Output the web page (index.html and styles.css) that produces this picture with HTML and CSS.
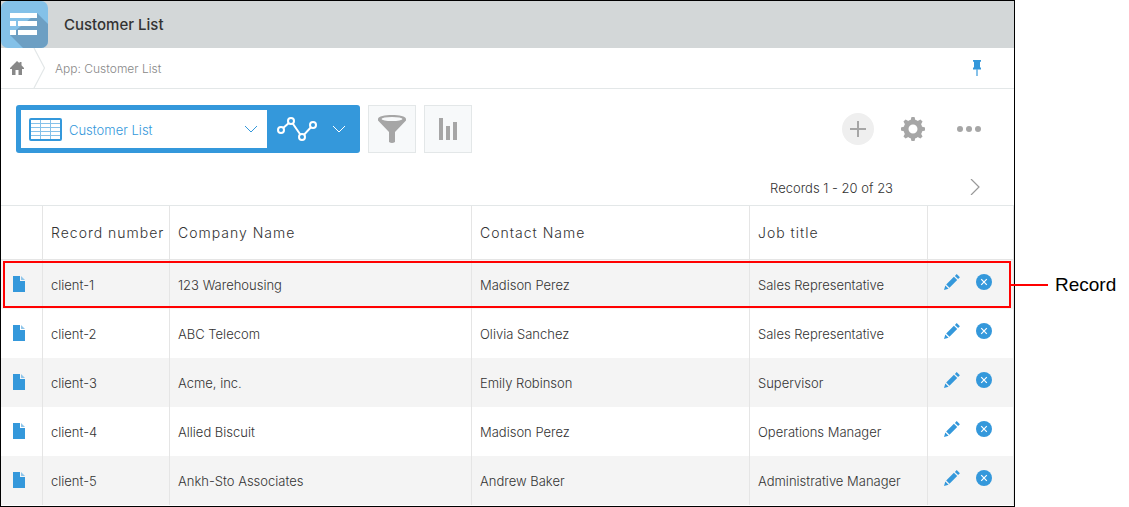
FILE: index.html
```html
<!DOCTYPE html>
<html lang="en">
<head>
<meta charset="utf-8">
<title>Customer List</title>
<link rel="stylesheet" href="styles.css">
</head>
<body>
<svg class="defs" aria-hidden="true">
  <symbol id="doc" viewBox="0 0 12 16"><path d="M0 0h7v5h5v11H0z" fill="#3498db"/><path d="M8 0l4 4H8z" fill="#8fc5ea"/></symbol>
  <symbol id="pencil" viewBox="0 0 16 16"><path d="M0 16l1.300-4.600 3.300 3.300zM2.200 10.500l7.700-7.700 3.300 3.300-7.700 7.700zM10.900 1.900L12.700.1l3.200 3.200-1.800 1.800z" fill="#3498db"/></symbol>
  <symbol id="remove" viewBox="0 0 16 16"><circle cx="8" cy="8" r="8" fill="#3498db"/><path d="M5.200 5.200l5.600 5.600M10.800 5.200l-5.600 5.600" stroke="#fff" stroke-width="1.200"/></symbol>
</svg>
<div class="page">
  <main class="app">
    <header class="title-bar">
      <svg class="logo" viewBox="0 0 47 47" aria-hidden="true">
        <rect width="47" height="47" rx="7" fill="#84c1e8"/>
        <path d="M36 12l11 11v17a7 7 0 0 1-7 7H22L9 34z" fill="#6d9fc3"/>
        <path d="M9 12h27v5H9zM9 20h6v5H9zM17 20h19v5H17zM9 29h6v5H9zM17 29h19v5H17z" fill="#fff"/>
      </svg>
      <h1>Customer List</h1>
    </header>
    <nav class="crumbs">
      <a class="home" href="#" aria-label="Home"><svg width="14" height="14" viewBox="0 0 14 14"><path d="M7 0l2.500 2.300V1h2v3.200L14 7v1h-2v6H8.500V9h-3v5H2V8H0V7z" fill="#888"/></svg></a>
      <svg class="divider" width="14" height="40" viewBox="0 0 14 40" aria-hidden="true"><path d="M2 0l10.500 20L2 40" fill="none" stroke="#e3e7e8" stroke-width="1.200"/></svg>
      <a class="crumb" href="#">App: Customer List</a>
      <button class="pin" aria-label="Pin"><svg width="8" height="16" viewBox="0 0 8 16"><path d="M0 0h8v1.800H7V7l1 1v1.500H0V8l1-1V1.800H0z" fill="#3498db"/><path d="M4 9v7" stroke="#5dade2" stroke-width="1.500"/></svg></button>
    </nav>
    <div class="toolbar">
      <div class="views">
        <button class="view">
          <svg width="33" height="23" viewBox="0 0 33 23" aria-hidden="true"><path d="M2 5.500h29M2 9.500h29M2 13.500h29M2 17.500h29M11.500 2v19M21.500 2v19" stroke="#85c1e9" fill="none"/><rect x="1" y="1" width="31" height="21" rx="1" fill="none" stroke="#3498db" stroke-width="2"/></svg>
          <span>Customer List</span>
          <svg class="caret" width="14" height="8" viewBox="0 0 14 8" aria-hidden="true"><path d="M1 1l6 6 6-6" fill="none" stroke="#3498db"/></svg>
        </button>
        <button class="graph" aria-label="Graphs">
          <svg width="40" height="24" viewBox="0 0 40 24"><path d="M4 13L14 4l11 16L36 8" fill="none" stroke="#fff" stroke-width="2"/><g fill="#3498db" stroke="#fff" stroke-width="2"><circle cx="4" cy="13" r="3"/><circle cx="14" cy="4" r="3"/><circle cx="25" cy="20" r="3"/><circle cx="36" cy="8" r="3"/></g></svg>
          <svg width="14" height="8" viewBox="0 0 14 8"><path d="M1 1l6 6 6-6" fill="none" stroke="#fff"/></svg>
        </button>
      </div>
      <button class="tool" aria-label="Filter"><svg width="28" height="28" viewBox="0 0 28 28"><path d="M0 4C0-1.300 28-1.300 28 4v1.500L17 17v10q-3 2-6 0V17L0 5.500z" fill="#a6a6a6"/><ellipse cx="14" cy="4" rx="10.500" ry="2" fill="#f7f9fa"/></svg></button>
      <button class="tool" aria-label="Chart"><svg width="18" height="22" viewBox="0 0 18 22"><path d="M0 0h4v22H0zM7 8h4v14H7zM14 4h4v18h-4z" fill="#a6a6a6"/></svg></button>
      <div class="actions">
        <button class="add" aria-label="Add record"><svg width="16" height="16" viewBox="0 0 16 16"><path d="M8 0v16M0 8h16" stroke="#a6a6a6" stroke-width="2"/></svg></button>
        <button aria-label="Settings"><svg width="24" height="24" viewBox="-12 -12 24 24"><circle r="7" fill="none" stroke="#a6a6a6" stroke-width="5"/><g fill="#a6a6a6"><path id="cog" d="M-2.500-8.500L-1.500-12h3l1 3.500zM-2.500 8.500L-1.500 12h3l1-3.500z"/><use href="#cog" transform="rotate(45)"/><use href="#cog" transform="rotate(90)"/><use href="#cog" transform="rotate(135)"/></g></svg></button>
        <button aria-label="More"><svg width="24" height="6" viewBox="0 0 24 6"><g fill="#a6a6a6"><circle cx="3" cy="3" r="3"/><circle cx="12" cy="3" r="3"/><circle cx="21" cy="3" r="3"/></g></svg></button>
      </div>
    </div>
    <div class="pager">
      <span>Records 1 - 20 of 23</span>
      <button aria-label="Next page"><svg width="10" height="16" viewBox="0 0 10 16"><path d="M1 0l8 8-8 8" fill="none" stroke="#999" stroke-width="1.200"/></svg></button>
    </div>
    <table class="records">
      <colgroup><col class="c-icon"><col class="c-number"><col><col class="c-contact"><col class="c-job"><col class="c-actions"></colgroup>
      <thead><tr><th></th><th>Record number</th><th>Company Name</th><th>Contact Name</th><th>Job title</th><th></th></tr></thead>
      <tbody>
        <tr class="marked"><td><a class="open" href="#" aria-label="Open"><svg><use href="#doc"/></svg></a></td><td>client-1</td><td>123 Warehousing</td><td>Madison Perez</td><td>Sales Representative</td><td><div class="row-tools"><button aria-label="Edit"><svg><use href="#pencil"/></svg></button><button aria-label="Delete"><svg><use href="#remove"/></svg></button></div><div class="callout"><span>Record</span></div></td></tr>
        <tr><td><a class="open" href="#" aria-label="Open"><svg><use href="#doc"/></svg></a></td><td>client-2</td><td>ABC Telecom</td><td>Olivia Sanchez</td><td>Sales Representative</td><td><div class="row-tools"><button aria-label="Edit"><svg><use href="#pencil"/></svg></button><button aria-label="Delete"><svg><use href="#remove"/></svg></button></div></td></tr>
        <tr><td><a class="open" href="#" aria-label="Open"><svg><use href="#doc"/></svg></a></td><td>client-3</td><td>Acme, inc.</td><td>Emily Robinson</td><td>Supervisor</td><td><div class="row-tools"><button aria-label="Edit"><svg><use href="#pencil"/></svg></button><button aria-label="Delete"><svg><use href="#remove"/></svg></button></div></td></tr>
        <tr><td><a class="open" href="#" aria-label="Open"><svg><use href="#doc"/></svg></a></td><td>client-4</td><td>Allied Biscuit</td><td>Madison Perez</td><td>Operations Manager</td><td><div class="row-tools"><button aria-label="Edit"><svg><use href="#pencil"/></svg></button><button aria-label="Delete"><svg><use href="#remove"/></svg></button></div></td></tr>
        <tr><td><a class="open" href="#" aria-label="Open"><svg><use href="#doc"/></svg></a></td><td>client-5</td><td>Ankh-Sto Associates</td><td>Andrew Baker</td><td>Administrative Manager</td><td><div class="row-tools"><button aria-label="Edit"><svg><use href="#pencil"/></svg></button><button aria-label="Delete"><svg><use href="#remove"/></svg></button></div></td></tr>
      </tbody>
    </table>
  </main>
</div>
</body>
</html>
```
FILE: styles.css
```css
* { box-sizing: border-box; }
body { margin: 0; background: #fff; color: #333; font: 300 13px/20px Inter, "Liberation Sans", sans-serif; }
button { padding: 0; border: 0; background: none; color: inherit; font: inherit; display: flex; align-items: center; justify-content: center; cursor: pointer; }
a { color: inherit; text-decoration: none; }
svg { display: block; flex: none; }
.defs { position: absolute; width: 0; height: 0; }
.page { padding-right: 114px; }
.app { border: 1px solid #000; padding-bottom: 1px; }

.title-bar { display: flex; align-items: center; gap: 16px; height: 47px; background: #d3d7d8; }
.logo { width: 47px; height: 47px; }
h1 { margin: 0; font-size: 15px; font-weight: 500; }

.crumbs { display: flex; align-items: center; height: 41px; padding: 0 33px 0 9px; border-bottom: 1px solid #e3e7e8; color: #888; font-size: 12px; }
.divider { margin: 0 9px 0 8px; }
.crumb { padding-top: 2px; }
.pin { margin-left: auto; }

.toolbar { display: flex; gap: 8px; padding: 16px 33px 0 15px; }
.views { display: flex; width: 344px; height: 48px; padding: 5px; background: #3498db; border-radius: 3px; }
.view { flex: 1; justify-content: flex-start; gap: 7px; padding: 0 9px 0 8px; background: #fff; color: #3498db; }
.view span { padding-top: 2px; }
.caret { margin-left: auto; }
.graph { gap: 15px; width: 88px; }
.tool { width: 48px; height: 48px; background: #f7f9fa; border: 1px solid #e3e7e8; }
.actions { display: flex; align-items: center; gap: 27px; margin-left: auto; }
.actions button:last-child { margin-left: 5px; }
.add { width: 32px; height: 32px; border-radius: 50%; background: #efefef; }

.pager { display: flex; align-items: center; justify-content: flex-end; gap: 77px; height: 52px; padding: 16px 34px 0 0; }
.pager span { padding-top: 2px; }

.records { width: 100%; table-layout: fixed; border-spacing: 0; border-top: 1px solid #e3e7e8; }
.c-icon { width: 42px; }
.c-number { width: 127px; }
.c-contact { width: 278px; }
.c-job { width: 178px; }
.c-actions { width: 86px; }
.records th, .records td { padding: 0 0 0 8px; border-right: 1px solid #e5e5e5; text-align: left; white-space: nowrap; }
.records th { height: 54px; border-bottom: 1px solid #e5e5e5; font-size: 14px; font-weight: 300; letter-spacing: 1px; }
.records td { height: 49px; }
.records tbody tr:nth-child(odd) { background: #f4f4f4; }
.records td:first-child { padding: 0 0 2px 12px; }
.records td:last-child { padding: 0 0 6px 16px; }
.open svg { width: 12px; height: 16px; }
.row-tools { display: flex; gap: 16px; }
.row-tools svg { width: 16px; height: 16px; }

.marked { position: relative; }
.callout { position: absolute; top: 1px; right: 3px; bottom: 1px; left: 2px; border: 2px solid #f00; pointer-events: none; }
.callout::after { content: ""; position: absolute; top: 50%; left: 100%; width: 39px; height: 2px; margin-top: -1px; background: #f00; }
.callout span { position: absolute; top: 50%; left: 100%; margin: -11px 0 0 46px; font: 400 19px/22px "Liberation Sans", Arial, sans-serif; color: #000; }
```
